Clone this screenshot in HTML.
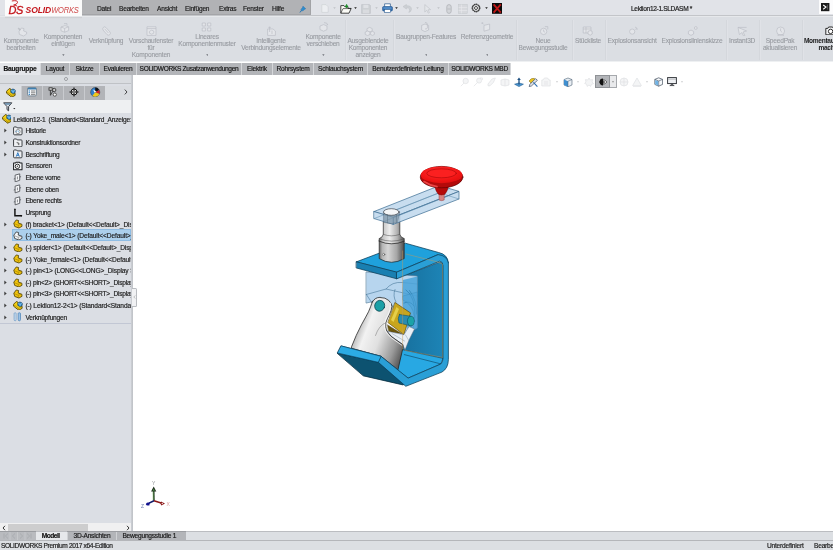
<!DOCTYPE html>
<html lang="de"><head><meta charset="utf-8"><title>SOLIDWORKS</title>
<style>
*{box-sizing:border-box;margin:0;padding:0}
html,body{width:833px;height:550px;overflow:hidden;background:#fff}
body{position:relative;font-family:"Liberation Sans",sans-serif;font-size:6.6px;letter-spacing:-0.22px;color:#1a1a1a;line-height:1}
.abs{position:absolute}
.t,.c,.tab,.row,.btab{will-change:transform}
.t,.tab,.row,.btab{-webkit-text-stroke:.18px #222}
.t{position:absolute;white-space:nowrap;line-height:8px;height:8px}
.c{position:absolute;white-space:nowrap;text-align:center;line-height:7px;color:#979aa0;-webkit-text-stroke:.1px #979aa0;transform:translateX(-50%)}
#top{left:0;top:0;width:833px;height:60.8px;background:#dbdee3}
#menubar{left:82px;top:0;width:229px;height:15.4px;background:#b1b2b5;border-bottom:1px solid #a4a5a8;border-right:1px solid #a2a3a6}
#logo{left:5px;top:0;width:77px;height:18px;background:#fbfbfb}
#tabs{left:0;top:62px;width:833px;height:12px;background:#fff}
.tab{position:absolute;top:62.5px;height:11.5px;background:#b3b5b9;border-right:1px solid #d5d7da;text-align:center;line-height:11.5px;color:#111;white-space:nowrap}
#panel{left:0;top:74px;width:133px;height:457px;background:#dbdee4}
#bottom{left:0;top:531px;width:833px;height:19px;background:#d6d8dc}
.row{position:absolute;left:0;width:131px;height:11px;white-space:nowrap;overflow:hidden;line-height:11px;color:#222}
.btab{top:532px;height:8px;background:#b3b5b9;text-align:center;line-height:8px;white-space:nowrap;color:#111}
</style></head><body>
<div id="top" class="abs"></div>
<div class="abs" style="left:0;top:0;width:833px;height:15px;background:#e1e3e8"></div>
<div class="abs" style="left:0;top:60.8px;width:833px;height:1.7px;background:#eef0f2"></div>
<div id="logo" class="abs"></div>
<div id="menubar" class="abs"></div>
<div id="tabs" class="abs"></div>
<div id="panel" class="abs"></div>
<!--MODEL--><svg class="abs" style="left:0;top:0" width="833" height="550" viewBox="0 0 833 550">
<defs>
<linearGradient id="gsil" x1="0" y1="0" x2="1" y2="0"><stop offset="0" stop-color="#6c6c6c"/><stop offset=".14" stop-color="#c4c4c4"/><stop offset=".42" stop-color="#ededed"/><stop offset=".72" stop-color="#b2b2b2"/><stop offset="1" stop-color="#505050"/></linearGradient>
<linearGradient id="gsil2" x1="0" y1="0" x2="1" y2="0"><stop offset="0" stop-color="#666"/><stop offset=".12" stop-color="#b4b4b4"/><stop offset=".35" stop-color="#d6d6d6"/><stop offset=".7" stop-color="#a6a6a6"/><stop offset="1" stop-color="#4a4a4a"/></linearGradient>
<linearGradient id="gcyl" x1="354" y1="330" x2="404" y2="349" gradientUnits="userSpaceOnUse"><stop offset="0" stop-color="#a8a8a8"/><stop offset=".22" stop-color="#f2f2f2"/><stop offset=".5" stop-color="#e0e0e0"/><stop offset=".82" stop-color="#9a9a9a"/><stop offset="1" stop-color="#5e5e5e"/></linearGradient>
<radialGradient id="gred" cx=".45" cy=".35" r=".8"><stop offset="0" stop-color="#ff3535"/><stop offset=".6" stop-color="#f01414"/><stop offset="1" stop-color="#d50d0d"/></radialGradient>
<linearGradient id="gback" x1="403" y1="0" x2="443" y2="0" gradientUnits="userSpaceOnUse"><stop offset="0" stop-color="#17719f"/><stop offset="1" stop-color="#1d84b6"/></linearGradient>
</defs>
<g stroke-linejoin="round" stroke-linecap="round">
<!-- back plate inner face -->
<path d="M403.3 276 L440 262 L443 264 L443 358.4 L403.3 349.9 Z" fill="url(#gback)" stroke="#0b3f5a" stroke-width=".6"/>
<!-- bend + bottom plate inner top face -->
<path d="M400 349.2 L443 358.4 L440.8 364 L408.1 378.1 L397.2 369.9 Z" fill="#28a8e3" stroke="#0b3f5a" stroke-width=".6"/>
<path d="M404.3 354.6 L440.8 363.9" stroke="#0b3f5a" stroke-width=".6" fill="none"/>
<!-- transparent yoke male body -->
<path d="M366.4 272 L417.3 276 L417.3 328 L404 336 L392 305 L380 297 L371 302 L366.4 303 Z" fill="#b7d5ee" stroke="#4a7594" stroke-width=".6"/>
<path d="M366.4 294.5 L386 289 L417 296 M386 289 Q392 281.5 402.5 282.5 L417 284 M366.4 294.5 L372 303 M395 289.5 Q392.5 296 396 302" fill="none" stroke="#3f6f92" stroke-width=".55"/>
<path d="M402.9 280 L417.3 276.5 L417.3 328 L409 333 Q400 310 402.9 280Z" fill="#4aa3d9" opacity=".85"/>
<path d="M406 290 Q415.5 296 415 318 M409.5 290.5 Q417 300 416.5 314 M404 303 Q410 300 414 306" fill="none" stroke="#1d6f9f" stroke-width=".5"/>
<!-- top plate top face -->
<path d="M356.5 261.8 L405.4 243.2 L438.6 252.5 Q447.6 254.4 448.4 263 L443 264 L438.1 254.6 L396.8 272.1 Z" fill="#1fa1dc" stroke="#0a3c57" stroke-width=".75"/>
<!-- top plate front-left face -->
<path d="M356.5 261.8 L396.8 272.1 L396.8 278.8 L356.5 268 Z" fill="#197fb1" stroke="#0a3c57" stroke-width=".75"/>
<!-- lip dark face -->
<path d="M337.6 353.4 L378.3 361.5 L405 384 L402.9 384.9 L363.6 375.9 Z" fill="#0d5270" stroke="#06283a" stroke-width=".75"/>
<!-- shaft -->
<path d="M379.2 241 L379.2 258.6 Q391.6 266 404.2 258.6 L404.2 241 Q391.6 246 379.2 241Z" fill="url(#gsil2)" stroke="#262626" stroke-width=".7"/>
<path d="M383.3 212 L383.3 234.2 Q383 237.2 379.2 238.6 L379.2 241.2 Q391.6 246.4 404.2 241.2 L404.2 238.6 Q400.2 237.2 399.8 234.2 L399.8 212 Z" fill="url(#gsil)" stroke="#262626" stroke-width=".7"/>
<path d="M379.3 238.8 Q391.6 243.6 404.1 238.8 M383.4 234.4 Q391.6 237.4 399.7 234.4" fill="none" stroke="#4a4a4a" stroke-width=".5"/>
<circle cx="383.7" cy="254.5" r="1.1" fill="#f2f2f2" stroke="#333" stroke-width=".45"/>
<!-- crank arm -->
<g fill="#bdd7ec" fill-opacity=".84" stroke="#3b6b91" stroke-width=".7">
<path d="M374.1 211.5 L439.4 185.6 L459 191.4 L393.3 217.3 Z"/>
<path d="M393.3 217.3 L459 191.4 L459 199 L393.3 224.4 Z"/>
<path d="M374.1 211.5 L393.3 217.3 L393.3 224.4 L374.1 218.6 Z"/>
</g>
<path d="M374.1 218.6 L439.4 192.8 L459 199 M439.4 192.8 L439.4 186 M384 214.6 L449.5 188.6 M384 221.4 L449.5 195.4" fill="none" stroke="#5584a6" stroke-width=".5"/>
<path d="M383.6 213 L383.6 222.3 Q391.4 225.2 397.6 222.3 L399.4 213Z" fill="#7f95a6" opacity=".7" stroke="#45586a" stroke-width=".5"/>
<ellipse cx="391.3" cy="212" rx="7.8" ry="3.3" fill="#f6f7f8" stroke="#33383e" stroke-width=".65"/>
<path d="M387.4 214.6 L387.4 222.8 M396.4 214.2 L396.4 222.4" stroke="#4f6272" stroke-width=".5" opacity=".85"/>
<!-- knob -->
<path d="M439 193 L439 200 Q441.6 201.3 444.2 200 L444.2 193Z" fill="#d88383" stroke="#8f3d3d" stroke-width=".45"/>
<path d="M434.6 186 Q436 192 438.3 194.2 Q441.6 195.8 444.9 194.2 Q447.2 192 448.6 186Z" fill="#b50a0a" stroke="#6e0303" stroke-width=".4"/>
<ellipse cx="441.6" cy="177.1" rx="21.3" ry="10.7" fill="#b40a0a" stroke="#5e0202" stroke-width=".7"/>
<path d="M424 181.5 Q430 185.6 437 186.6" fill="none" stroke="#ff5a5a" stroke-width="1.6" opacity=".75"/>
<ellipse cx="441.6" cy="174.9" rx="20.8" ry="8.3" fill="url(#gred)"/>
<ellipse cx="441.6" cy="173.3" rx="14.8" ry="4.5" fill="#fb2020" stroke="#a80707" stroke-width=".6"/>
<!-- spider (yellow) -->
<path d="M395.2 302.6 L410.5 312.9 L403.9 334.7 L388.1 322.7 Z" fill="#c8a51d" stroke="#4d3d06" stroke-width=".6"/>
<path d="M396.5 307 L399 309 L393.5 322 L391 320Z" fill="#e6cf4a"/>
<path d="M387.6 324.9 L401.8 333.7 L388.7 331.5Z" fill="#6b560c" stroke="#3a2d04" stroke-width=".4"/>
<!-- pin 2 teal -->
<path d="M399.5 314.5 L410.5 316.2 L411.4 326 L399 323 Q397.2 318.5 399.5 314.5Z" fill="#2a8bb0" stroke="#0b4656" stroke-width=".5"/>
<ellipse cx="411" cy="321.1" rx="3.6" ry="4.9" fill="#1ba3a8" stroke="#0b4656" stroke-width=".55"/>
<path d="M402.9 296 L417.3 292 L417.3 328 L412 331 Q416 321 413 311 Q410 303 402.9 300Z" fill="#4aa3d9" opacity=".55" stroke="#1d6f9f" stroke-width=".4"/>
<!-- fork 2 (white-ish) -->
<path d="M386.5 330.4 L391.9 336.9 L402.8 344.6 L405 350 L409 340 L414.5 329 L409 326.5 L403.9 334.7 L388.7 331.5Z" fill="#e9eff5" stroke="#59677a" stroke-width=".5"/>
<path d="M392 333.5 L404.5 341 M405.5 335 L408.5 340" fill="none" stroke="#8593a3" stroke-width=".45"/>
<!-- yoke female silver body -->
<path d="M372.3 302 Q375 297.2 379.9 297.5 Q385.5 297.4 388.7 300.4 Q391.6 303 391.9 306.4 Q391.6 310.5 389.7 314 Q387.2 318.5 385.9 322.7 Q385.4 327 386.5 330.4 Q388.5 334 391.9 336.9 L402.8 344.6 L402.9 348.1 L397.9 369.9 L381 356.3 L351.6 348.3 L351.5 346.8 Q356 335 361.4 324.9 Q365.5 317.5 368.5 311.8 Q370.6 307 372.3 302Z" fill="url(#gcyl)" stroke="#1f1f1f" stroke-width=".75"/>
<path d="M390.6 303 Q390.6 310 388.4 314 Q385.4 319.5 384.6 323 Q384 328 385.6 331 Q387.5 334.6 391.3 337.8 L401.8 345.2" fill="none" stroke="#fafafa" stroke-width=".8"/>
<path d="M385.9 322.7 Q379 325 375.5 335.5" fill="none" stroke="#7d7d7d" stroke-width=".55"/>
<ellipse cx="379.7" cy="305.8" rx="5" ry="5.5" fill="#1b9fa6" stroke="#0a3f4a" stroke-width=".7" transform="rotate(18 379.7 305.8)"/>
<!-- profile face (C-shape) -->
<path d="M396.8 272.1 L438.1 254.6 Q446.8 255.4 448.4 263 L448.4 359.5 Q448.2 368.5 441.9 372.1 L405.8 386.3 L378.3 362.3 L337.6 353 L341.2 345.9 L381 356.3 L408.1 378.1 L440.8 364 Q443 361.5 443 358.4 L443 265.5 Q442.8 261.6 439.7 261.2 L396.8 278.8 Z" fill="#2a9fd6" stroke="#0a3c57" stroke-width=".75"/>
<path d="M381 356.3 L378.3 362.3" stroke="#0a3c57" stroke-width=".6"/>
<path d="M341.2 345.9 L381 356.3 L378.3 362.3 L337.6 353Z" fill="#2cabe4" stroke="#0a3c57" stroke-width=".6"/>
<!-- orange sketch lines -->
<path d="M402.6 251 L402.6 349 M405.9 254 L436.5 261.7 L442.5 264 L442.7 357.5 L405.5 350.5" fill="none" stroke="#c29a5a" stroke-width=".55" opacity=".85"/>
</g>
</svg>
<!--/MODEL-->
<div id="bottom" class="abs"></div>
<!--PANEL-->
<div class="abs" style="left:0;top:74px;width:133px;height:9px;background:#d9dce0"></div>
<div class="abs" style="left:0;top:82.5px;width:131px;height:1px;background:#bfc2c6"></div><div class="abs" style="left:0;top:74px;width:133px;height:1px;background:#c4c6ca"></div>
<div class="abs" style="left:63.5px;top:77px;width:4px;height:4px;border:.7px solid #9a9da1;border-radius:50%;background:#e8eaed"></div>
<div class="abs" style="left:0;top:85.5px;width:21px;height:14px;background:#dde0e4"></div>
<div class="abs" style="left:21px;top:85.5px;width:21px;height:14px;background:#b2b4b8;border-left:1px solid #c9cbcf"></div>
<div class="abs" style="left:42px;top:85.5px;width:21px;height:14px;background:#b2b4b8;border-left:1px solid #c9cbcf"></div>
<div class="abs" style="left:63px;top:85.5px;width:21px;height:14px;background:#b2b4b8;border-left:1px solid #c9cbcf"></div>
<div class="abs" style="left:84px;top:85.5px;width:21px;height:14px;background:#b2b4b8;border-left:1px solid #c9cbcf"></div>
<div class="abs" style="left:105px;top:85.5px;width:26px;height:14px;background:#d9dce0"></div>
<svg class="abs" style="left:124.00px;top:89.00px" width="4" height="6" viewBox="0 0 4 6"><path d="M0.8 0.6 L3 3 L0.8 5.4" fill="none" stroke="#333" stroke-width=".9"/></svg>
<div class="abs" style="left:0;top:100px;width:131px;height:12.8px;background:#eef0f2"></div>
<div class="abs" style="left:131px;top:74px;width:2.2px;height:457px;background:linear-gradient(90deg,#cdd0d5,#bec1c6)"></div>
<div class="abs" style="left:11.6px;top:229.4px;width:119.4px;height:11.8px;background:#acd0ec;border:.6px solid #8fbde4"></div>
<div class="row" style="top:113.70px;padding-left:13.3px">Lektion12-1&nbsp; (Standard&lt;Standard_Anzeige:</div>
<svg class="abs" style="left:1.50px;top:114.40px" width="9.6" height="9.6" viewBox="0 0 10 10"><path d="M3.4 .6 L.5 3.5 L.6 5.4 L5.9 9.6 L9.5 7.7 L9.5 5.6 L6 4.6 L5.2 1.2Z" fill="#f2cd14" stroke="#4a3c00" stroke-width=".85" stroke-linejoin="round"/><path d="M.7 3.8 L5.9 7.6 L9.4 5.9 M5.9 7.6 L5.9 9.4" fill="none" stroke="#8a7000" stroke-width=".5"/><path d="M5 2.4 L7.2 1 L9.6 2.2 L9.6 4.6 L7.4 5.8 L5 4.6Z" fill="#2f8fd4" stroke="#0f3a5e" stroke-width=".7" stroke-linejoin="round"/><path d="M5.2 2.5 L7.4 3.5 L9.5 2.4 M7.4 3.5 L7.4 5.6" stroke="#d5ebfa" stroke-width=".5" fill="none"/></svg>
<div class="row" style="top:125.35px;padding-left:25.4px">Historie</div>
<svg class="abs" style="left:13.20px;top:126.05px" width="9.6" height="9.6" viewBox="0 0 10 10"><path d="M0.6 2 Q0.6 1 1.6 1 L3.6 1 L4.4 2 L8.6 2 Q9.4 2 9.4 3 L9.4 8.2 Q9.4 9.2 8.4 9.2 L1.6 9.2 Q0.6 9.2 0.6 8.2 Z" fill="#eef0f3" stroke="#2e3136" stroke-width=".95"/><circle cx="5.2" cy="5.8" r="2.2" fill="#fff" stroke="#555" stroke-width=".6"/><path d="M5.2 4.5 L5.2 5.9 L6.3 6.4" stroke="#2b7fc4" stroke-width=".6" fill="none"/><path d="M2.4 5.6 L3.6 5 L3.6 6.4Z" fill="#2b7fc4"/></svg>
<svg class="abs" style="left:3.60px;top:128.35px" width="3" height="5" viewBox="0 0 3 5"><path d="M0.3 0.4 L2.7 2.5 L0.3 4.6Z" fill="#3c3c3c"/></svg>
<div class="row" style="top:137.00px;padding-left:25.4px">Konstruktionsordner</div>
<svg class="abs" style="left:13.20px;top:137.70px" width="9.6" height="9.6" viewBox="0 0 10 10"><path d="M0.6 2 Q0.6 1 1.6 1 L3.6 1 L4.4 2 L8.6 2 Q9.4 2 9.4 3 L9.4 8.2 Q9.4 9.2 8.4 9.2 L1.6 9.2 Q0.6 9.2 0.6 8.2 Z" fill="#eef0f3" stroke="#2e3136" stroke-width=".95"/><path d="M4 4.4 L6.4 5.2 L6.4 7.4 L5.4 7 L5.4 5.6 L4 5.2Z" fill="#777" stroke="#444" stroke-width=".3"/></svg>
<svg class="abs" style="left:3.60px;top:140.00px" width="3" height="5" viewBox="0 0 3 5"><path d="M0.3 0.4 L2.7 2.5 L0.3 4.6Z" fill="#3c3c3c"/></svg>
<div class="row" style="top:148.65px;padding-left:25.4px">Beschriftung</div>
<svg class="abs" style="left:13.20px;top:149.35px" width="9.6" height="9.6" viewBox="0 0 10 10"><path d="M0.6 2 Q0.6 1 1.6 1 L3.6 1 L4.4 2 L8.6 2 Q9.4 2 9.4 3 L9.4 8.2 Q9.4 9.2 8.4 9.2 L1.6 9.2 Q0.6 9.2 0.6 8.2 Z" fill="#eef0f3" stroke="#2e3136" stroke-width=".95"/><path d="M3.4 8 L5 3.8 L6.6 8 M4 6.6 L6 6.6" stroke="#1d6fbe" stroke-width=".9" fill="none"/></svg>
<svg class="abs" style="left:3.60px;top:151.65px" width="3" height="5" viewBox="0 0 3 5"><path d="M0.3 0.4 L2.7 2.5 L0.3 4.6Z" fill="#3c3c3c"/></svg>
<div class="row" style="top:160.30px;padding-left:25.4px">Sensoren</div>
<svg class="abs" style="left:13.20px;top:161.00px" width="9.6" height="9.6" viewBox="0 0 10 10"><path d="M0.6 2.2 L2.6 2.2 L3.2 1.2 L6.8 1.2 L7.4 2.2 L9.4 2.2 L9.4 9 L0.6 9Z" fill="#f3f4f6" stroke="#1c1e21" stroke-width="1.05" stroke-linejoin="round"/><circle cx="4.6" cy="5.6" r="2.3" fill="#fff" stroke="#1c1e21" stroke-width=".95"/><circle cx="4.6" cy="5.6" r=".8" fill="#555"/></svg>
<div class="row" style="top:171.95px;padding-left:25.4px">Ebene vorne</div>
<svg class="abs" style="left:13.20px;top:172.65px" width="9.6" height="9.6" viewBox="0 0 10 10"><path d="M2.2 2.2 L7 0.9 L7 7.6 L2.2 9.2 Z" fill="#f6f7f9" stroke="#55585d" stroke-width=".95" stroke-linejoin="round"/><path d="M7 4.2 L8.4 3.8 M2.2 5.9 L0.8 6.3" stroke="#55585d" stroke-width=".9"/><path d="M4.6 3.6 L4.6 6.6" stroke="#6a6d72" stroke-width=".8"/></svg>
<div class="row" style="top:183.60px;padding-left:25.4px">Ebene oben</div>
<svg class="abs" style="left:13.20px;top:184.30px" width="9.6" height="9.6" viewBox="0 0 10 10"><path d="M2.2 2.2 L7 0.9 L7 7.6 L2.2 9.2 Z" fill="#f6f7f9" stroke="#55585d" stroke-width=".95" stroke-linejoin="round"/><path d="M7 4.2 L8.4 3.8 M2.2 5.9 L0.8 6.3" stroke="#55585d" stroke-width=".9"/><path d="M4.6 3.6 L4.6 6.6" stroke="#6a6d72" stroke-width=".8"/></svg>
<div class="row" style="top:195.25px;padding-left:25.4px">Ebene rechts</div>
<svg class="abs" style="left:13.20px;top:195.95px" width="9.6" height="9.6" viewBox="0 0 10 10"><path d="M2.2 2.2 L7 0.9 L7 7.6 L2.2 9.2 Z" fill="#f6f7f9" stroke="#55585d" stroke-width=".95" stroke-linejoin="round"/><path d="M7 4.2 L8.4 3.8 M2.2 5.9 L0.8 6.3" stroke="#55585d" stroke-width=".9"/><path d="M4.6 3.6 L4.6 6.6" stroke="#6a6d72" stroke-width=".8"/></svg>
<div class="row" style="top:206.90px;padding-left:25.4px">Ursprung</div>
<svg class="abs" style="left:13.20px;top:207.60px" width="9.6" height="9.6" viewBox="0 0 10 10"><path d="M2 0.8 L2 8 L9.4 8" fill="none" stroke="#111" stroke-width="1.5" stroke-linejoin="miter"/><path d="M2 0.4 L3 2 L1 2Z M9.8 8 L8.2 7 L8.2 9Z" fill="#1a1a1a"/></svg>
<div class="row" style="letter-spacing:-.12px;top:218.55px;padding-left:25.4px">(f) bracket&lt;1&gt; (Default&lt;&lt;Default&gt;_Display State 1&gt;)</div>
<svg class="abs" style="left:13.20px;top:219.25px" width="9.6" height="9.6" viewBox="0 0 10 10"><path d="M0.8 4.4 L3.4 1 L5.8 1.6 L5.4 4.2 L9.2 5.4 L9.4 7.6 L6.2 9.4 L1.8 7.8 Z" fill="#f1c40c" stroke="#4e3f00" stroke-width=".85" stroke-linejoin="round"/><path d="M1.2 4.8 L5.4 6.4 L9 5.6 M5.4 6.4 L5.6 9" fill="none" stroke="#8a6e00" stroke-width=".5"/></svg>
<svg class="abs" style="left:3.60px;top:221.55px" width="3" height="5" viewBox="0 0 3 5"><path d="M0.3 0.4 L2.7 2.5 L0.3 4.6Z" fill="#3c3c3c"/></svg>
<div class="row" style="letter-spacing:-.12px;top:230.20px;padding-left:25.4px">(-) Yoke_male&lt;1&gt; (Default&lt;&lt;Default&gt;_Display State 1&gt;)</div>
<svg class="abs" style="left:13.20px;top:230.90px" width="9.6" height="9.6" viewBox="0 0 10 10"><path d="M0.8 4.4 L3.4 1 L5.8 1.6 L5.4 4.2 L9.2 5.4 L9.4 7.6 L6.2 9.4 L1.8 7.8 Z" fill="#f4f6f8" stroke="#333" stroke-width=".85" stroke-linejoin="round"/><path d="M1.2 4.8 L5.4 6.4 L9 5.6 M5.4 6.4 L5.6 9" fill="none" stroke="#666" stroke-width=".5"/></svg>
<div class="row" style="letter-spacing:-.12px;top:241.85px;padding-left:25.4px">(-) spider&lt;1&gt; (Default&lt;&lt;Default&gt;_Display State 1&gt;)</div>
<svg class="abs" style="left:13.20px;top:242.55px" width="9.6" height="9.6" viewBox="0 0 10 10"><path d="M0.8 4.4 L3.4 1 L5.8 1.6 L5.4 4.2 L9.2 5.4 L9.4 7.6 L6.2 9.4 L1.8 7.8 Z" fill="#f1c40c" stroke="#4e3f00" stroke-width=".85" stroke-linejoin="round"/><path d="M1.2 4.8 L5.4 6.4 L9 5.6 M5.4 6.4 L5.6 9" fill="none" stroke="#8a6e00" stroke-width=".5"/></svg>
<svg class="abs" style="left:3.60px;top:244.85px" width="3" height="5" viewBox="0 0 3 5"><path d="M0.3 0.4 L2.7 2.5 L0.3 4.6Z" fill="#3c3c3c"/></svg>
<div class="row" style="letter-spacing:-.12px;top:253.50px;padding-left:25.4px">(-) Yoke_female&lt;1&gt; (Default&lt;&lt;Default&gt;_Display State 1&gt;)</div>
<svg class="abs" style="left:13.20px;top:254.20px" width="9.6" height="9.6" viewBox="0 0 10 10"><path d="M0.8 4.4 L3.4 1 L5.8 1.6 L5.4 4.2 L9.2 5.4 L9.4 7.6 L6.2 9.4 L1.8 7.8 Z" fill="#f1c40c" stroke="#4e3f00" stroke-width=".85" stroke-linejoin="round"/><path d="M1.2 4.8 L5.4 6.4 L9 5.6 M5.4 6.4 L5.6 9" fill="none" stroke="#8a6e00" stroke-width=".5"/></svg>
<svg class="abs" style="left:3.60px;top:256.50px" width="3" height="5" viewBox="0 0 3 5"><path d="M0.3 0.4 L2.7 2.5 L0.3 4.6Z" fill="#3c3c3c"/></svg>
<div class="row" style="letter-spacing:-.12px;top:265.15px;padding-left:25.4px">(-) pin&lt;1&gt; (LONG&lt;&lt;LONG&gt;_Display State 1&gt;)</div>
<svg class="abs" style="left:13.20px;top:265.85px" width="9.6" height="9.6" viewBox="0 0 10 10"><path d="M0.8 4.4 L3.4 1 L5.8 1.6 L5.4 4.2 L9.2 5.4 L9.4 7.6 L6.2 9.4 L1.8 7.8 Z" fill="#f1c40c" stroke="#4e3f00" stroke-width=".85" stroke-linejoin="round"/><path d="M1.2 4.8 L5.4 6.4 L9 5.6 M5.4 6.4 L5.6 9" fill="none" stroke="#8a6e00" stroke-width=".5"/></svg>
<svg class="abs" style="left:3.60px;top:268.15px" width="3" height="5" viewBox="0 0 3 5"><path d="M0.3 0.4 L2.7 2.5 L0.3 4.6Z" fill="#3c3c3c"/></svg>
<div class="row" style="top:276.80px;padding-left:25.4px">(-) pin&lt;2&gt; (SHORT&lt;&lt;SHORT&gt;_Display State 1&gt;)</div>
<svg class="abs" style="left:13.20px;top:277.50px" width="9.6" height="9.6" viewBox="0 0 10 10"><path d="M0.8 4.4 L3.4 1 L5.8 1.6 L5.4 4.2 L9.2 5.4 L9.4 7.6 L6.2 9.4 L1.8 7.8 Z" fill="#f1c40c" stroke="#4e3f00" stroke-width=".85" stroke-linejoin="round"/><path d="M1.2 4.8 L5.4 6.4 L9 5.6 M5.4 6.4 L5.6 9" fill="none" stroke="#8a6e00" stroke-width=".5"/></svg>
<svg class="abs" style="left:3.60px;top:279.80px" width="3" height="5" viewBox="0 0 3 5"><path d="M0.3 0.4 L2.7 2.5 L0.3 4.6Z" fill="#3c3c3c"/></svg>
<div class="row" style="top:288.45px;padding-left:25.4px">(-) pin&lt;3&gt; (SHORT&lt;&lt;SHORT&gt;_Display State 1&gt;)</div>
<svg class="abs" style="left:13.20px;top:289.15px" width="9.6" height="9.6" viewBox="0 0 10 10"><path d="M0.8 4.4 L3.4 1 L5.8 1.6 L5.4 4.2 L9.2 5.4 L9.4 7.6 L6.2 9.4 L1.8 7.8 Z" fill="#f1c40c" stroke="#4e3f00" stroke-width=".85" stroke-linejoin="round"/><path d="M1.2 4.8 L5.4 6.4 L9 5.6 M5.4 6.4 L5.6 9" fill="none" stroke="#8a6e00" stroke-width=".5"/></svg>
<svg class="abs" style="left:3.60px;top:291.45px" width="3" height="5" viewBox="0 0 3 5"><path d="M0.3 0.4 L2.7 2.5 L0.3 4.6Z" fill="#3c3c3c"/></svg>
<div class="row" style="letter-spacing:-.12px;top:300.10px;padding-left:25.4px">(-) Lektion12-2&lt;1&gt; (Standard&lt;Standard_Anzeigestatus-1&gt;)</div>
<svg class="abs" style="left:13.20px;top:300.80px" width="9.6" height="9.6" viewBox="0 0 10 10"><path d="M3.4 .6 L.5 3.5 L.6 5.4 L5.9 9.6 L9.5 7.7 L9.5 5.6 L6 4.6 L5.2 1.2Z" fill="#f2cd14" stroke="#4a3c00" stroke-width=".85" stroke-linejoin="round"/><path d="M.7 3.8 L5.9 7.6 L9.4 5.9 M5.9 7.6 L5.9 9.4" fill="none" stroke="#8a7000" stroke-width=".5"/><path d="M5 2.4 L7.2 1 L9.6 2.2 L9.6 4.6 L7.4 5.8 L5 4.6Z" fill="#2f8fd4" stroke="#0f3a5e" stroke-width=".7" stroke-linejoin="round"/><path d="M5.2 2.5 L7.4 3.5 L9.5 2.4 M7.4 3.5 L7.4 5.6" stroke="#d5ebfa" stroke-width=".5" fill="none"/></svg>
<svg class="abs" style="left:3.60px;top:303.10px" width="3" height="5" viewBox="0 0 3 5"><path d="M0.3 0.4 L2.7 2.5 L0.3 4.6Z" fill="#3c3c3c"/></svg>
<div class="row" style="top:311.75px;padding-left:25.4px">Verknüpfungen</div>
<svg class="abs" style="left:13.20px;top:312.45px" width="9.6" height="9.6" viewBox="0 0 10 10"><path d="M1.2 1.6 Q1.2 .8 2.2 .8 Q3.2 .8 3.2 1.6 L3.2 7.8 Q3.2 9.2 2.2 9.2 Q1.2 9.2 1.2 7.8Z" fill="#d7e7f5" stroke="#5b8fc0" stroke-width=".7"/><path d="M5.4 1.6 Q5.4 .8 6.6 .8 Q7.8 .8 7.8 1.6 L7.8 7.8 Q7.8 9.2 6.6 9.2 Q5.4 9.2 5.4 7.8Z" fill="#9cc4e8" stroke="#3d78b0" stroke-width=".7"/></svg>
<svg class="abs" style="left:3.60px;top:314.75px" width="3" height="5" viewBox="0 0 3 5"><path d="M0.3 0.4 L2.7 2.5 L0.3 4.6Z" fill="#3c3c3c"/></svg>
<!--/PANEL-->
<!--MGR-->
<svg class="abs" style="left:6.20px;top:87.60px" width="9.6" height="9.6" viewBox="0 0 10 10"><path d="M3.4 .6 L.5 3.5 L.6 5.4 L5.9 9.6 L9.5 7.7 L9.5 5.6 L6 4.6 L5.2 1.2Z" fill="#f2cd14" stroke="#4a3c00" stroke-width=".85" stroke-linejoin="round"/><path d="M.7 3.8 L5.9 7.6 L9.4 5.9 M5.9 7.6 L5.9 9.4" fill="none" stroke="#8a7000" stroke-width=".5"/><path d="M5 2.4 L7.2 1 L9.6 2.2 L9.6 4.6 L7.4 5.8 L5 4.6Z" fill="#2f8fd4" stroke="#0f3a5e" stroke-width=".7" stroke-linejoin="round"/><path d="M5.2 2.5 L7.4 3.5 L9.5 2.4 M7.4 3.5 L7.4 5.6" stroke="#d5ebfa" stroke-width=".5" fill="none"/></svg>
<svg class="abs" style="left:26.80px;top:87.40px" width="10" height="9.4" viewBox="0 0 10 9.4"><rect x=".5" y=".5" width="9" height="8.4" rx="1.4" fill="#f4f6f8" stroke="#5a6e80" stroke-width=".7"/><path d="M.8 2.4 L9.2 2.4 L9.2 1.8 Q9.2 .8 8.2 .8 L1.8 .8 Q.8 .8 .8 1.8Z" fill="#3f7fb0"/><path d="M4 4 L8.4 4 M4 5.8 L8.4 5.8 M4 7.6 L8.4 7.6" stroke="#555" stroke-width=".7"/><path d="M1.6 4 L3 4 M1.6 5.8 L3 5.8 M1.6 7.6 L3 7.6" stroke="#2b7fc4" stroke-width="1"/></svg>
<svg class="abs" style="left:48.20px;top:87.20px" width="10" height="10" viewBox="0 0 10 10"><rect x="1" y=".8" width="3.2" height="2.4" fill="#d8d8d8" stroke="#2a2a2a" stroke-width=".8"/><path d="M2.4 3.2 L2.4 8.6 M2.6 8 L5.2 3.6" fill="none" stroke="#2a2a2a" stroke-width=".8"/><circle cx="6.2" cy="3" r="1.7" fill="#c9c9c9" stroke="#2a2a2a" stroke-width=".8"/><circle cx="6.8" cy="7.6" r="1.6" fill="#f8f8f8" stroke="#2a2a2a" stroke-width=".7"/></svg>
<svg class="abs" style="left:69.40px;top:87.20px" width="10" height="10" viewBox="0 0 10 10"><circle cx="5" cy="5" r="3" fill="#dedede" stroke="#111" stroke-width="1"/><path d="M5 .4 L5 9.6 M.4 5 L9.6 5" stroke="#111" stroke-width=".9"/><circle cx="5" cy="5" r="1" fill="#fff" stroke="#111" stroke-width=".5"/></svg>
<svg class="abs" style="left:90.20px;top:87.00px" width="10.4" height="10.4" viewBox="0 0 10.4 10.4"><circle cx="5.2" cy="5.2" r="4.6" fill="#2f7fd0" stroke="#333" stroke-width=".5"/><path d="M5.2 5.2 L5.2 .6 A4.6 4.6 0 0 1 9.2 3Z" fill="#111"/><path d="M5.2 5.2 L9.2 3 A4.6 4.6 0 0 1 9.4 7Z" fill="#d62020"/><path d="M5.2 5.2 L9.4 7 A4.6 4.6 0 0 1 2.4 8.8Z" fill="#f2c81a"/><path d="M3.2 2.6 L6.4 4.6 L4.4 5.4Z" fill="#fff"/></svg>
<svg class="abs" style="left:2.80px;top:101.80px" width="13" height="10" viewBox="0 0 13 10"><path d="M.6 .8 L8.8 .8 L5.6 4.6 L5.6 8.8 L4 7.6 L4 4.6 Z" fill="#dfe6ee" stroke="#2a2d33" stroke-width=".9" stroke-linejoin="round"/><path d="M1.4 1.2 L8 1.2 L6.6 2.8 L2.8 2.8Z" fill="#5f88a8"/><path d="M10.2 6 L12.4 6 L11.3 7.2Z" fill="#222"/></svg>
<div class="abs" style="left:131.5px;top:287.5px;width:5.5px;height:19px;background:#f1f2f4;border:.6px solid #b9bcc0;border-left:none;border-radius:0 1.5px 1.5px 0"></div>
<svg class="abs" style="left:133.00px;top:295.00px" width="3" height="4" viewBox="0 0 3 4"><path d="M2.2 .5 L.8 2 L2.2 3.5" fill="none" stroke="#888" stroke-width=".5"/></svg>
<div class="abs" style="left:0;top:322.8px;width:131px;height:1px;background:#c2c7d4"></div>
<!--/MGR-->
<!--BOT-->
<div class="abs" style="left:0;top:523px;width:131px;height:8px;background:#f0f0f1"></div>
<div class="abs" style="left:8px;top:524px;width:80px;height:7px;background:#cdcdce"></div>
<svg class="abs" style="left:1.60px;top:524.60px" width="4" height="6" viewBox="0 0 4 6"><path d="M3 .8 L1 3 L3 5.2" fill="none" stroke="#222" stroke-width=".9"/></svg>
<svg class="abs" style="left:126.00px;top:524.60px" width="4" height="6" viewBox="0 0 4 6"><path d="M1 .8 L3 3 L1 5.2" fill="none" stroke="#222" stroke-width=".9"/></svg>
<div class="abs" style="left:0;top:531.3px;width:833px;height:1.2px;background:#bbbdc1"></div><div class="abs" style="left:0;top:531.3px;width:36px;height:.9px;background:#9b9da1"></div><div class="abs" style="left:67px;top:531.3px;width:118.5px;height:.9px;background:#9b9da1"></div>
<div class="abs" style="left:0;top:532px;width:36px;height:8px;background:#b9bbbf"></div>
<svg class="abs" style="left:1.00px;top:532.00px" width="34" height="8" viewBox="0 0 34 8"><path d="M3 1.5 L3 6.5 M7 1.5 L4.4 4 L7 6.5" fill="none" stroke="#a4a6aa" stroke-width=".7"/><path d="M14 1.5 L11.4 4 L14 6.5" fill="none" stroke="#a4a6aa" stroke-width=".7"/><path d="M19 1.5 L21.6 4 L19 6.5" fill="none" stroke="#a4a6aa" stroke-width=".7"/><path d="M26 1.5 L28.6 4 L26 6.5 M30 1.5 L30 6.5" fill="none" stroke="#a4a6aa" stroke-width=".7"/><path d="M9 0 L9 8 M16.5 0 L16.5 8 M24 0 L24 8" stroke="#cfd1d4" stroke-width=".6"/></svg>
<div class="abs btab" style="left:36px;width:31px;background:#e6e8eb;font-weight:bold;letter-spacing:-.5px;text-indent:-1.5px">Modell</div>
<div class="abs btab" style="left:67px;width:49px;border-left:1px solid #d0d2d5">3D-Ansichten</div>
<div class="abs btab" style="left:116px;width:69.5px;border-left:1px solid #d0d2d5;text-align:left;padding-left:5.4px">Bewegungsstudie 1</div>
<div class="abs" style="left:185.5px;top:532px;width:648px;height:8px;background:#dcdfe3"></div>
<div class="abs" style="left:0;top:540px;width:833px;height:1.3px;background:#b4b6ba"></div>
<div class="abs" style="left:0;top:541.3px;width:833px;height:8.7px;background:#dcdfe3"></div>
<div class="t" style="left:1px;top:542px;letter-spacing:-.36px">SOLIDWORKS Premium 2017 x64-Edition</div>
<div class="t" style="left:766.5px;top:542px">Unterdefiniert</div>
<div class="t" style="left:814px;top:542px">Bearbeiten Baugruppe</div>
<!--/BOT-->
<!--LOGO-->
<div class="abs" style="left:5px;top:17px;width:77px;height:1.5px;background:linear-gradient(#c9cbcf,#dfe1e5)"></div>
<svg class="abs" style="left:5.00px;top:0.00px" width="77" height="18" viewBox="0 0 77 18"><path d="M7.2 .9 Q12.9 -.1 12.5 2.5 Q12 4.5 8.6 5.1 Q11.6 4.9 12.2 6.2" fill="none" stroke="#c4161c" stroke-width=".95" stroke-linecap="round"/><text x="3.4" y="14.3" font-family="Liberation Sans, sans-serif" font-size="11.6" font-style="italic" fill="#c4161c" stroke="#c4161c" stroke-width=".35" textLength="14.8" lengthAdjust="spacingAndGlyphs">DS</text><text x="20.6" y="13.2" font-family="Liberation Sans, sans-serif" font-size="8.2" font-style="italic" font-weight="bold" fill="#c4161c" letter-spacing="-0.1" textLength="25.6" lengthAdjust="spacingAndGlyphs">SOLID</text><text x="46.2" y="13.2" font-family="Liberation Sans, sans-serif" font-size="8.2" font-style="italic" fill="#cf4a4a" textLength="27.4" lengthAdjust="spacingAndGlyphs">WORKS</text></svg>
<!--/LOGO-->
<!--TB-->
<svg class="abs" style="left:298.80px;top:5.00px" width="8" height="8" viewBox="0 0 8 8"><path d="M4 1.2 L6.6 3.8 L5.4 4.4 L3.6 6 L3 5.4 L.8 7.4 L2.6 5 L2 4.4 L3.6 2.6Z" fill="#2f8fd0" stroke="#1f6aa8" stroke-width=".5"/></svg>
<svg class="abs" style="left:321.00px;top:3.80px" width="8" height="9" viewBox="0 0 8 9"><path d="M.8 .6 L5 .6 L7.2 2.8 L7.2 8.4 L.8 8.4Z" fill="#eceef1" stroke="#cfd2d6" stroke-width=".7"/></svg>
<svg class="abs" style="left:333.40px;top:7.00px" width="3" height="2.4" viewBox="0 0 3 2.4"><path d="M.2 .3 L2.8 .3 L1.5 2Z" fill="#bfc2c7"/></svg>
<svg class="abs" style="left:339.60px;top:3.60px" width="12" height="10" viewBox="0 0 12 10"><path d="M.8 1.6 L4 1.6 L4.8 2.8 L8 2.8 L8 4.4 L11.2 4.4 L9 9.2 L.8 9.2Z" fill="#fbfbf6" stroke="#1a1a1a" stroke-width=".8" stroke-linejoin="round"/><path d="M.8 9.2 L3 4.6 L11 4.6" fill="none" stroke="#1a1a1a" stroke-width=".6"/><path d="M6.6 .2 L6.6 2.6 M5.2 2 L6.6 3.8 L8 2Z" stroke="#1d8a2a" stroke-width="1" fill="#1d8a2a"/></svg>
<svg class="abs" style="left:354.10px;top:7.00px" width="3" height="2.4" viewBox="0 0 3 2.4"><path d="M.2 .3 L2.8 .3 L1.5 2Z" fill="#222"/></svg>
<svg class="abs" style="left:361.20px;top:3.60px" width="10" height="10" viewBox="0 0 10 10"><path d="M.6 .6 L8.4 .6 L9.4 1.6 L9.4 9.4 L.6 9.4Z" fill="#cdd0d4" stroke="#bcbfc4" stroke-width=".6"/><rect x="2.4" y=".8" width="5" height="3.2" fill="#dfe1e5"/><rect x="2" y="5.6" width="6" height="3.6" fill="#d9dbdf"/></svg>
<svg class="abs" style="left:375.00px;top:7.00px" width="3" height="2.4" viewBox="0 0 3 2.4"><path d="M.2 .3 L2.8 .3 L1.5 2Z" fill="#bfc2c7"/></svg>
<svg class="abs" style="left:381.60px;top:3.40px" width="11" height="10" viewBox="0 0 11 10"><path d="M2.6 3.6 L2.6 .8 L8.4 .8 L8.4 3.6" fill="#fff" stroke="#27568c" stroke-width=".7"/><rect x=".6" y="3.6" width="9.8" height="4.4" rx="1" fill="#2f72b8" stroke="#1d4e85" stroke-width=".6"/><rect x="2.4" y="6.4" width="6.2" height="3.2" fill="#fff" stroke="#27568c" stroke-width=".6"/><path d="M1.4 5 L9.6 5" stroke="#9cc3ea" stroke-width=".6"/></svg>
<svg class="abs" style="left:395.10px;top:7.00px" width="3" height="2.4" viewBox="0 0 3 2.4"><path d="M.2 .3 L2.8 .3 L1.5 2Z" fill="#222"/></svg>
<svg class="abs" style="left:402.00px;top:4.00px" width="11" height="9" viewBox="0 0 11 9"><path d="M1 2.6 L4.4 .6 L4.4 1.8 Q9.6 1.4 9.4 5.4 Q9.2 7.8 6.8 8.4 Q8.2 6.6 7.4 5 Q6.6 3.6 4.4 3.8 L4.4 5Z" fill="#cdd0d5" stroke="#bdc0c5" stroke-width=".5"/></svg>
<svg class="abs" style="left:416.20px;top:7.00px" width="3" height="2.4" viewBox="0 0 3 2.4"><path d="M.2 .3 L2.8 .3 L1.5 2Z" fill="#bfc2c7"/></svg>
<svg class="abs" style="left:423.60px;top:3.60px" width="8" height="10" viewBox="0 0 8 10"><path d="M.8 .6 L.8 8 L2.8 6.2 L4.2 9.2 L5.4 8.6 L4 5.8 L6.6 5.6Z" fill="#e4e6ea" stroke="#bec1c6" stroke-width=".6"/></svg>
<svg class="abs" style="left:436.50px;top:7.00px" width="3" height="2.4" viewBox="0 0 3 2.4"><path d="M.2 .3 L2.8 .3 L1.5 2Z" fill="#bfc2c7"/></svg>
<svg class="abs" style="left:445.80px;top:3.60px" width="6" height="10" viewBox="0 0 6 10"><rect x=".8" y=".6" width="4.4" height="8.8" rx="2.2" fill="#d4d6da" stroke="#b0b3b8" stroke-width=".8"/><path d="M1.4 5 L4.6 5" stroke="#b0b3b8" stroke-width=".7"/></svg>
<svg class="abs" style="left:458.00px;top:3.60px" width="10" height="10" viewBox="0 0 10 10"><rect x=".6" y=".6" width="8.6" height="8.8" fill="#d6d8dc" stroke="#c2c5c9" stroke-width=".5"/><path d="M3.4 .6 L3.4 9.4 M.6 3.4 L9.2 3.4 M.6 6.4 L9.2 6.4" stroke="#e8eaed" stroke-width=".7"/></svg>
<svg class="abs" style="left:471.20px;top:3.40px" width="10" height="10" viewBox="0 0 10 10"><circle cx="5" cy="5" r="3.9" fill="#f2f3f5" stroke="#1a1a1a" stroke-width="1" stroke-dasharray="1.6 .6"/><circle cx="5" cy="5" r="3.4" fill="none" stroke="#1a1a1a" stroke-width=".7"/><circle cx="5" cy="5" r="1.5" fill="#fff" stroke="#1a1a1a" stroke-width=".8"/></svg>
<svg class="abs" style="left:484.60px;top:7.00px" width="3" height="2.4" viewBox="0 0 3 2.4"><path d="M.2 .3 L2.8 .3 L1.5 2Z" fill="#222"/></svg>
<svg class="abs" style="left:491.80px;top:3.20px" width="10.2" height="10.8" viewBox="0 0 10.2 10.8"><rect width="10.2" height="10.8" fill="#0a0a0a"/><path d="M1.6 1.4 L8.8 9.6 M8.8 1.4 L1.6 9.6" stroke="#c01818" stroke-width="1.8"/></svg>
<div class="abs" style="left:818.8px;top:0;width:14.2px;height:14px;background:#fbfbfc"></div>
<svg class="abs" style="left:821.40px;top:3.40px" width="8.4" height="8.2" viewBox="0 0 8.4 8.2"><rect width="8.4" height="8.2" fill="#1c1c1c"/><path d="M2.2 2 L5 4.1 L2.2 6.2" fill="none" stroke="#fff" stroke-width="1.1"/><path d="M6.4 1.6 L6.4 6.6" stroke="#888" stroke-width=".6"/></svg>
<!--/TB-->
<!--RIB-->
<svg class="abs" style="left:17.10px;top:26.90px" width="11" height="10" viewBox="0 0 11 10"><path d="M2 4.6 L4.4 1 L7 1.6 L6.6 4 L9.6 5 L9.6 7 L6.6 9 L2.4 7.4Z" fill="#e3e5e9" stroke="#bcbfc5" stroke-width=".7" stroke-linejoin="round"/><path d="M1 1 L3.6 2.2 L2.6 3.4Z" fill="#bcbfc5" stroke="#bcbfc5" stroke-width=".7" stroke-linejoin="round"/></svg>
<svg class="abs" style="left:58.50px;top:22.90px" width="11" height="10" viewBox="0 0 11 10"><path d="M2 4 L6 2.6 L9.6 3.8 L9.6 7.6 L5.6 9.2 L2 7.8Z" fill="#e3e5e9" stroke="#bcbfc5" stroke-width=".7" stroke-linejoin="round"/><path d="M2 4 L5.6 5.4 L9.6 3.8 M5.6 5.4 L5.6 9.2" fill="none" stroke="#bcbfc5" stroke-width=".7" stroke-linejoin="round"/><path d="M5 .6 L8 .6 L8 2.4" fill="none" stroke="#bcbfc5" stroke-width=".7" stroke-linejoin="round"/></svg>
<svg class="abs" style="left:100.50px;top:25.90px" width="11" height="10" viewBox="0 0 11 10"><path d="M2.4 1.4 Q3.6 .2 4.8 1.4 L9 6 Q10 7.6 8.6 8.8 Q7.2 9.8 6 8.6 L2 4 Q1.2 2.6 2.4 1.4Z" fill="#e3e5e9" stroke="#bcbfc5" stroke-width=".7" stroke-linejoin="round"/><path d="M3.6 2.8 L7.4 7" fill="none" stroke="#bcbfc5" stroke-width=".7" stroke-linejoin="round"/></svg>
<svg class="abs" style="left:145.50px;top:26.40px" width="11" height="10" viewBox="0 0 11 10"><path d="M1 .8 L10 .8 L10 9.4 L1 9.4Z" fill="#e3e5e9" stroke="#bcbfc5" stroke-width=".7" stroke-linejoin="round"/><path d="M1 2.6 L10 2.6" fill="none" stroke="#bcbfc5" stroke-width=".7" stroke-linejoin="round"/><path d="M3.4 5.4 L5.6 4.2 L7.8 5 L7.8 7.2 L5.6 8.2 L3.4 7.2Z" fill="#e3e5e9" stroke="#bcbfc5" stroke-width=".7" stroke-linejoin="round"/></svg>
<svg class="abs" style="left:201.00px;top:22.40px" width="11" height="10" viewBox="0 0 11 10"><path d="M1.2 1 L4.4 1 L4.4 4 L1.2 4Z" fill="#e3e5e9" stroke="#bcbfc5" stroke-width=".7" stroke-linejoin="round"/><path d="M6.6 1 L9.8 1 L9.8 4 L6.6 4Z" fill="#e3e5e9" stroke="#bcbfc5" stroke-width=".7" stroke-linejoin="round"/><path d="M1.2 6 L4.4 6 L4.4 9 L1.2 9Z" fill="#e3e5e9" stroke="#bcbfc5" stroke-width=".7" stroke-linejoin="round"/><path d="M6.6 6 L9.8 6 L9.8 9 L6.6 9Z" fill="#e3e5e9" stroke="#bcbfc5" stroke-width=".7" stroke-linejoin="round"/></svg>
<svg class="abs" style="left:265.50px;top:26.40px" width="11" height="10" viewBox="0 0 11 10"><path d="M1.6 3 L7 3 L9.4 5 L9.4 9.4 L1.6 9.4Z" fill="#e3e5e9" stroke="#bcbfc5" stroke-width=".7" stroke-linejoin="round"/><path d="M3.6 .6 L3.6 6 M2.4 1.4 L4.8 1.4" fill="none" stroke="#bcbfc5" stroke-width=".7" stroke-linejoin="round"/><path d="M6 4.6 L6 8" fill="none" stroke="#bcbfc5" stroke-width=".7" stroke-linejoin="round"/></svg>
<svg class="abs" style="left:318.00px;top:22.40px" width="11" height="10" viewBox="0 0 11 10"><path d="M2 4 L5.6 2.6 L9 4 L9 7.6 L5.6 9.2 L2 7.6Z" fill="#e3e5e9" stroke="#bcbfc5" stroke-width=".7" stroke-linejoin="round"/><path d="M6 .6 Q9.6 .6 9.8 3 M9.8 3 L8.6 2.2" fill="none" stroke="#bcbfc5" stroke-width=".7" stroke-linejoin="round"/></svg>
<svg class="abs" style="left:363.50px;top:25.90px" width="11" height="10" viewBox="0 0 11 10"><path d="M3 2.6 L5.6 1.4 L8.2 2.6 L8.2 5 L5.6 6 L3 5Z" fill="#e3e5e9" stroke="#bcbfc5" stroke-width=".7" stroke-linejoin="round"/><path d="M1.2 6 L3.6 5 L6 6 L6 8.4 L3.6 9.6 L1.2 8.4Z" fill="#e3e5e9" stroke="#bcbfc5" stroke-width=".7" stroke-linejoin="round"/><path d="M6.4 6.4 L8.6 5.4 L10.4 6.4 L10.4 8.4 L8.6 9.4 L6.4 8.4Z" fill="#e3e5e9" stroke="#bcbfc5" stroke-width=".7" stroke-linejoin="round"/></svg>
<svg class="abs" style="left:420.00px;top:22.40px" width="11" height="10" viewBox="0 0 11 10"><path d="M1.6 3.4 L5 2 L8.6 3.4 L8.6 8 L5 9.6 L1.6 8Z" fill="#e3e5e9" stroke="#bcbfc5" stroke-width=".7" stroke-linejoin="round"/><path d="M5 .4 Q7.4 .4 7.4 2.6 L7.4 6 Q7.4 7 5 7" fill="none" stroke="#bcbfc5" stroke-width=".7" stroke-linejoin="round"/></svg>
<svg class="abs" style="left:481.30px;top:22.40px" width="11" height="10" viewBox="0 0 11 10"><path d="M3 3.4 L8.6 2 L8.6 7.6 L3 9.2Z" fill="#e3e5e9" stroke="#bcbfc5" stroke-width=".7" stroke-linejoin="round"/><path d="M1 .8 L2.6 2.4 M1 .8 L2.2 .8 M1 .8 L1 2" fill="none" stroke="#bcbfc5" stroke-width=".7" stroke-linejoin="round"/></svg>
<svg class="abs" style="left:538.00px;top:25.90px" width="11" height="10" viewBox="0 0 11 10"><path d="M2.4 5.4 A3.2 3.2 0 1 0 8.8 5.4 A3.2 3.2 0 1 0 2.4 5.4Z" fill="#e3e5e9" stroke="#bcbfc5" stroke-width=".7" stroke-linejoin="round"/><path d="M5.6 3.6 L5.6 5.4 L7 6.2" fill="none" stroke="#bcbfc5" stroke-width=".7" stroke-linejoin="round"/><path d="M6.8 .6 L9.8 .6 L9.8 3.4" fill="none" stroke="#bcbfc5" stroke-width=".7" stroke-linejoin="round"/></svg>
<svg class="abs" style="left:582.10px;top:25.90px" width="11" height="10" viewBox="0 0 11 10"><path d="M1.2 1 L9 1 L9 7 L1.2 7Z" fill="#e3e5e9" stroke="#bcbfc5" stroke-width=".7" stroke-linejoin="round"/><path d="M1.2 3 L9 3 M4 1 L4 7" fill="none" stroke="#bcbfc5" stroke-width=".7" stroke-linejoin="round"/><path d="M6 5.4 L8.2 4.6 L10.2 5.4 L10.2 8 L8.2 9.2 L6 8Z" fill="#e3e5e9" stroke="#bcbfc5" stroke-width=".7" stroke-linejoin="round"/></svg>
<svg class="abs" style="left:628.00px;top:25.90px" width="11" height="10" viewBox="0 0 11 10"><path d="M1.6 5.6 A2.6 2.6 0 1 0 6.8 5.6 A2.6 2.6 0 1 0 1.6 5.6Z" fill="#e3e5e9" stroke="#bcbfc5" stroke-width=".7" stroke-linejoin="round"/><path d="M7 1 L9 2.2 L9 4 M7.4 3.4 L8.6 2.4" fill="none" stroke="#bcbfc5" stroke-width=".7" stroke-linejoin="round"/></svg>
<svg class="abs" style="left:686.50px;top:25.90px" width="11" height="10" viewBox="0 0 11 10"><path d="M1.4 5.4 L4 4 L6.6 5.4 L6.6 8 L4 9.4 L1.4 8Z" fill="#e3e5e9" stroke="#bcbfc5" stroke-width=".7" stroke-linejoin="round"/><path d="M7.4 2 A1.4 1.4 0 1 0 10.2 2 A1.4 1.4 0 1 0 7.4 2Z" fill="#e3e5e9" stroke="#bcbfc5" stroke-width=".7" stroke-linejoin="round"/></svg>
<svg class="abs" style="left:737.10px;top:25.90px" width="11" height="10" viewBox="0 0 11 10"><path d="M1 1.4 L9.6 5 L6 6 L7.8 9.4 L6.4 9.8 L4.8 6.6 L2.4 8.6Z" fill="#e3e5e9" stroke="#bcbfc5" stroke-width=".7" stroke-linejoin="round"/><path d="M1 1.4 L9.6 1.4" fill="none" stroke="#bcbfc5" stroke-width=".7" stroke-linejoin="round"/></svg>
<svg class="abs" style="left:775.00px;top:25.90px" width="11" height="10" viewBox="0 0 11 10"><path d="M1.6 5 A4 4 0 1 0 9.6 5 A4 4 0 1 0 1.6 5Z" fill="#e3e5e9" stroke="#bcbfc5" stroke-width=".7" stroke-linejoin="round"/><path d="M5.6 2.4 L5.6 5 L7.2 6.4" fill="none" stroke="#bcbfc5" stroke-width=".7" stroke-linejoin="round"/><path d="M3 8.6 L8.4 8.6 L8.4 9.8 L3 9.8Z" fill="#e3e5e9" stroke="#bcbfc5" stroke-width=".7" stroke-linejoin="round"/></svg>
<svg class="abs" style="left:824.60px;top:26.00px" width="10" height="9.4" viewBox="0 0 10 9.4"><path d="M.8 2.4 L2.8 2.4 L3.6 1 L7.6 1 L8.4 2.4 L10 2.4 L10 8.8 L.8 8.8Z" fill="#f2f3f5" stroke="#1a1a1a" stroke-width=".9" stroke-linejoin="round"/><circle cx="5.6" cy="5.4" r="2.2" fill="#fff" stroke="#1a1a1a" stroke-width=".9"/></svg>
<svg class="abs" style="left:62.00px;top:54.10px" width="2.8" height="2.2" viewBox="0 0 2.8 2.2"><path d="M.2 .3 L2.6 .3 L1.4 1.9Z" fill="#70737a"/></svg>
<svg class="abs" style="left:205.60px;top:54.10px" width="2.8" height="2.2" viewBox="0 0 2.8 2.2"><path d="M.2 .3 L2.6 .3 L1.4 1.9Z" fill="#70737a"/></svg>
<svg class="abs" style="left:321.90px;top:54.10px" width="2.8" height="2.2" viewBox="0 0 2.8 2.2"><path d="M.2 .3 L2.6 .3 L1.4 1.9Z" fill="#70737a"/></svg>
<svg class="abs" style="left:424.60px;top:54.10px" width="2.8" height="2.2" viewBox="0 0 2.8 2.2"><path d="M.2 .3 L2.6 .3 L1.4 1.9Z" fill="#70737a"/></svg>
<svg class="abs" style="left:485.60px;top:54.10px" width="2.8" height="2.2" viewBox="0 0 2.8 2.2"><path d="M.2 .3 L2.6 .3 L1.4 1.9Z" fill="#70737a"/></svg>
<div class="abs" style="left:345.0px;top:20px;width:1px;height:40px;background:#d4d7dc"></div><div class="abs" style="left:346.0px;top:20px;width:1px;height:40px;background:#e0e2e7"></div>
<div class="abs" style="left:392.8px;top:20px;width:1px;height:40px;background:#d4d7dc"></div><div class="abs" style="left:393.8px;top:20px;width:1px;height:40px;background:#e0e2e7"></div>
<div class="abs" style="left:515.8px;top:20px;width:1px;height:40px;background:#d4d7dc"></div><div class="abs" style="left:516.8px;top:20px;width:1px;height:40px;background:#e0e2e7"></div>
<div class="abs" style="left:571.8px;top:20px;width:1px;height:40px;background:#d4d7dc"></div><div class="abs" style="left:572.8px;top:20px;width:1px;height:40px;background:#e0e2e7"></div>
<div class="abs" style="left:605.3px;top:20px;width:1px;height:40px;background:#d4d7dc"></div><div class="abs" style="left:606.3px;top:20px;width:1px;height:40px;background:#e0e2e7"></div>
<div class="abs" style="left:725.8px;top:20px;width:1px;height:40px;background:#d4d7dc"></div><div class="abs" style="left:726.8px;top:20px;width:1px;height:40px;background:#e0e2e7"></div>
<div class="abs" style="left:759.0px;top:20px;width:1px;height:40px;background:#d4d7dc"></div><div class="abs" style="left:760.0px;top:20px;width:1px;height:40px;background:#e0e2e7"></div>
<div class="abs" style="left:801.5px;top:20px;width:1px;height:40px;background:#d4d7dc"></div><div class="abs" style="left:802.5px;top:20px;width:1px;height:40px;background:#e0e2e7"></div>
<!--/RIB-->
<!--HUD-->
<svg class="abs" style="left:459.50px;top:77.00px" width="10" height="10" viewBox="0 0 10 10"><path d="M3 4 A2.6 2.6 0 1 0 8.4 4 A2.6 2.6 0 1 0 3 4Z" fill="#f4f5f6" stroke="#dfe1e4" stroke-width=".7" stroke-linejoin="round"/><path d="M4 6 L.8 9.2" fill="none" stroke="#dfe1e4" stroke-width=".7" stroke-linejoin="round"/></svg>
<svg class="abs" style="left:473.00px;top:77.00px" width="10" height="10" viewBox="0 0 10 10"><path d="M3.6 3.6 A2.4 2.4 0 1 0 8.6 3.6 A2.4 2.4 0 1 0 3.6 3.6Z" fill="#f4f5f6" stroke="#dfe1e4" stroke-width=".7" stroke-linejoin="round"/><path d="M4.4 5.6 L.8 9.2 M7 1 L9.4 1 L9.4 3" fill="none" stroke="#dfe1e4" stroke-width=".7" stroke-linejoin="round"/></svg>
<svg class="abs" style="left:487.00px;top:77.00px" width="10" height="10" viewBox="0 0 10 10"><path d="M5 2 L8.4 1 L6.4 5.4 L3 8.8 L1 8.8 L1 7Z" fill="#f4f5f6" stroke="#dfe1e4" stroke-width=".7" stroke-linejoin="round"/></svg>
<svg class="abs" style="left:500.00px;top:77.00px" width="10" height="10" viewBox="0 0 10 10"><path d="M1 3 L5 2 L9 3 L9 8 L5 9 L1 8Z" fill="#f4f5f6" stroke="#dfe1e4" stroke-width=".7" stroke-linejoin="round"/><path d="M5 2 L5 9" fill="none" stroke="#dfe1e4" stroke-width=".7" stroke-linejoin="round"/></svg>
<svg class="abs" style="left:513.60px;top:76.60px" width="10" height="10.4" viewBox="0 0 10 10.4"><path d="M.6 7.2 L5 6 L9.4 7.2 L5 9.6Z" fill="#4a94cf" stroke="#1d5a90" stroke-width=".6"/><path d="M5 7.6 L5 2.4" stroke="#1d4f80" stroke-width="1.3"/><path d="M5 .4 L6.8 3 L3.2 3Z" fill="#1d4f80"/></svg>
<svg class="abs" style="left:527.60px;top:76.60px" width="10.4" height="10.4" viewBox="0 0 10.4 10.4"><path d="M1 4 Q3 .6 6.4 1.4 L8 3 Q5 3 3.4 6.4Z" fill="#e9c21e" stroke="#7b6410" stroke-width=".5"/><path d="M7.6 1.6 L9.4 3.4 L3.4 9 L1.2 9.6 L1.8 7.4Z" fill="#dfe3e8" stroke="#3d4d66" stroke-width=".7"/><path d="M5.4 5.4 L9.4 9.6" stroke="#2f6fb0" stroke-width="1.1"/></svg>
<svg class="abs" style="left:541.40px;top:77.00px" width="10" height="10" viewBox="0 0 10 10"><path d="M2 3 L3.4 1 L6.6 1 L8 3 L9.2 3 L9.2 9 L.8 9 L.8 3Z" fill="#f4f5f6" stroke="#dfe1e4" stroke-width=".7" stroke-linejoin="round"/><path d="M3 5 L7 5 M3 7 L7 7" fill="none" stroke="#dfe1e4" stroke-width=".7" stroke-linejoin="round"/></svg>
<svg class="abs" style="left:556.00px;top:81.00px" width="2" height="2" viewBox="0 0 2 2"><path d="M.2 .4 L1.8 .4 L1 1.6Z" fill="#8a8d92"/></svg>
<svg class="abs" style="left:562.80px;top:76.60px" width="10" height="10.4" viewBox="0 0 10 10.4"><path d="M1 2.6 L5 1 L9 2.6 L9 8 L5 9.8 L1 8Z" fill="#e9eef3" stroke="#4b5f73" stroke-width=".6" stroke-linejoin="round"/><path d="M1 2.6 L5 4.2 L5 9.8 L1 8Z" fill="#3f8fd0"/><path d="M5 4.2 L9 2.6 M5 4.2 L5 9.8" stroke="#4b5f73" stroke-width=".5" fill="none"/></svg>
<svg class="abs" style="left:576.80px;top:81.00px" width="2" height="2" viewBox="0 0 2 2"><path d="M.2 .4 L1.8 .4 L1 1.6Z" fill="#8a8d92"/></svg>
<svg class="abs" style="left:583.60px;top:77.00px" width="10" height="10" viewBox="0 0 10 10"><path d="M5 1 L6.2 3 L8.6 2.6 L8 5 L9.6 6.6 L7.4 7.4 L6.6 9.4 L5 8 L3.2 9.4 L2.6 7.2 L.6 6.4 L2 5 L1.4 2.6 L3.8 3Z" fill="#f4f5f6" stroke="#dfe1e4" stroke-width=".7" stroke-linejoin="round"/></svg>
<div class="abs" style="left:595.3px;top:75.2px;width:14.7px;height:12.8px;background:#b3b5b9;border:.6px solid #8f9296"></div>
<div class="abs" style="left:610px;top:75.2px;width:7px;height:12.8px;background:#e9eaec;border:.6px solid #a6a9ad;border-left:none"></div>
<svg class="abs" style="left:598.00px;top:76.80px" width="10" height="10" viewBox="0 0 10 10"><path d="M1 5 Q5 .4 9 5 Q5 9.6 1 5Z" fill="#f4f4f4" stroke="#222" stroke-width=".6"/><path d="M5 1.6 A3.4 3.4 0 0 0 5 8.4 Z" fill="#111"/><circle cx="5.2" cy="5" r="1.5" fill="#111"/><path d="M5.4 4.2 L6.4 5 L5.4 5.8" fill="#fff"/></svg>
<svg class="abs" style="left:612.40px;top:81.00px" width="2" height="2" viewBox="0 0 2 2"><path d="M.2 .4 L1.8 .4 L1 1.6Z" fill="#222"/></svg>
<svg class="abs" style="left:619.00px;top:77.00px" width="10" height="10" viewBox="0 0 10 10"><path d="M1 5 A4 4 0 1 0 9 5 A4 4 0 1 0 1 5Z" fill="#f4f5f6" stroke="#dfe1e4" stroke-width=".7" stroke-linejoin="round"/><path d="M5 1 L5 9 M1 5 L9 5" fill="none" stroke="#dfe1e4" stroke-width=".7" stroke-linejoin="round"/></svg>
<svg class="abs" style="left:632.00px;top:77.00px" width="10" height="10" viewBox="0 0 10 10"><path d="M5 1 L9.4 8.6 L.6 8.6Z" fill="#f4f5f6" stroke="#dfe1e4" stroke-width=".7" stroke-linejoin="round"/><path d="M1 9.6 L9 9.6" fill="none" stroke="#dfe1e4" stroke-width=".7" stroke-linejoin="round"/></svg>
<svg class="abs" style="left:646.40px;top:81.00px" width="2" height="2" viewBox="0 0 2 2"><path d="M.2 .4 L1.8 .4 L1 1.6Z" fill="#8a8d92"/></svg>
<svg class="abs" style="left:654.00px;top:77.00px" width="9.4" height="9.8" viewBox="0 0 9.4 9.8"><path d="M.8 2.4 L4.7 .8 L8.6 2.4 L8.6 7.4 L4.7 9.2 L.8 7.4Z" fill="#f6f8fa" stroke="#3f4c5c" stroke-width=".7" stroke-linejoin="round"/><path d="M.8 2.4 L4.7 4 L8.6 2.4 M4.7 4 L4.7 9.2" fill="none" stroke="#3f4c5c" stroke-width=".6"/><path d="M1.2 3 L4.3 4.3 L4.3 8.6 L1.2 7.2Z" fill="#6fb2e4"/></svg>
<svg class="abs" style="left:667.20px;top:77.40px" width="10" height="9.2" viewBox="0 0 10 9.2"><rect x=".6" y=".6" width="8.8" height="6" fill="#eef0f3" stroke="#2e3136" stroke-width=".95"/><path d="M.6 2.2 L9.4 2.2" stroke="#8a8d92" stroke-width=".5"/><path d="M5 6.6 L5 8 M2.8 8.6 L7.2 8.6 L5 7.4Z" stroke="#3a3d42" stroke-width=".7" fill="#3a3d42"/></svg>
<svg class="abs" style="left:681.30px;top:81.00px" width="2" height="2" viewBox="0 0 2 2"><path d="M.2 .4 L1.8 .4 L1 1.6Z" fill="#8a8d92"/></svg>
<svg class="abs" style="left:0;top:0" width="833" height="550" viewBox="0 0 833 550"><path d="M153.9 500.8 L153.7 490.5" stroke="#1f3d1f" stroke-width="1.6"/><path d="M153.1 500 L153.1 491" stroke="#86c070" stroke-width=".6"/><path d="M153.7 486.6 L156.3 491.4 L151.1 491.4Z" fill="#1c2b1c"/><path d="M153.7 488.4 L154.8 490.8 L152.6 490.8Z" fill="#4f8f45"/><path d="M153.9 500.8 L162 503.2" stroke="#8b1717" stroke-width="1.5"/><path d="M161 501.4 L165 503.6 L161.4 505.4 L160.4 503.4Z" fill="#8b1717"/><circle cx="162.3" cy="503.5" r=".8" fill="#fff" opacity=".8"/><path d="M153.9 500.8 L148.6 503.4" stroke="#0f1a6a" stroke-width="1.6"/><path d="M149.8 502 L145.6 504.4 L149.4 505.6Z" fill="#12128f"/><circle cx="147.6" cy="504" r="1.5" fill="#12128f"/><text x="151.9" y="484.6" font-family="Liberation Sans, sans-serif" font-size="5" fill="#8c8f93">Y</text><text x="166.4" y="506.4" font-family="Liberation Sans, sans-serif" font-size="5" fill="#d99a9a">X</text><text x="141" y="508" font-family="Liberation Sans, sans-serif" font-size="5" fill="#6d7fae">Z</text></svg>
<!--/HUD-->
<!-- top line -->
<div class="abs" style="left:82px;top:14.8px;width:751px;height:1.6px;background:#c3c5c9"></div>
<div class="abs" style="left:0;top:16.4px;width:833px;height:1px;background:#e6e8eb"></div>
<!-- menu -->
<div class="t m" style="left:97px;top:5px">Datei</div>
<div class="t m" style="left:119px;top:5px">Bearbeiten</div>
<div class="t m" style="left:157px;top:5px">Ansicht</div>
<div class="t m" style="left:185px;top:5px">Einfügen</div>
<div class="t m" style="left:219px;top:5px">Extras</div>
<div class="t m" style="left:243px;top:5px">Fenster</div>
<div class="t m" style="left:272px;top:5px">Hilfe</div>
<div class="t m" style="left:631px;top:5px;letter-spacing:-.34px">Lektion12-1.SLDASM *</div>
<!-- ribbon labels -->
<div class="c" style="left:21px;top:37px">Komponente<br>bearbeiten</div>
<div class="c" style="left:63px;top:33px">Komponenten<br>einfügen</div>
<div class="c" style="left:106px;top:37px">Verknüpfung</div>
<div class="c" style="left:151px;top:37px">Vorschaufenster<br>für<br>Komponenten</div>
<div class="c" style="left:207px;top:33px">Lineares<br>Komponentenmuster</div>
<div class="c" style="left:271px;top:37px">Intelligente<br>Verbindungselemente</div>
<div class="c" style="left:323px;top:33px">Komponente<br>verschieben</div>
<div class="c" style="left:368px;top:37px">Ausgeblendete<br>Komponenten<br>anzeigen</div>
<div class="c" style="left:426px;top:33px">Baugruppen-Features</div>
<div class="c" style="left:487px;top:33px">Referenzgeometrie</div>
<div class="c" style="left:543px;top:37px">Neue<br>Bewegungsstudie</div>
<div class="c" style="left:588px;top:37px">Stückliste</div>
<div class="c" style="left:632px;top:37px">Explosionsansicht</div>
<div class="c" style="left:692px;top:37px">Explosionslinienskizze</div>
<div class="c" style="left:742px;top:37px">Instant3D</div>
<div class="c" style="left:780px;top:37px">SpeedPak<br>aktualisieren</div>
<div class="c" style="left:829.6px;top:37px;color:#111;font-weight:bold;letter-spacing:-.3px">Momentaufnahme<br>machen</div>
<!-- tabs -->
<div class="tab" style="left:0;width:41px;background:#e4e6ea;font-weight:bold">Baugruppe</div>
<div class="tab" style="left:41px;width:29px">Layout</div>
<div class="tab" style="left:70px;width:30px">Skizze</div>
<div class="tab" style="left:100px;width:37px">Evaluieren</div>
<div class="tab" style="left:137px;width:105px;letter-spacing:-.32px">SOLIDWORKS Zusatzanwendungen</div>
<div class="tab" style="left:242px;width:31px">Elektrik</div>
<div class="tab" style="left:273px;width:41px">Rohrsystem</div>
<div class="tab" style="left:314px;width:54px">Schlauchsystem</div>
<div class="tab" style="left:368px;width:81px">Benutzerdefinierte Leitung</div>
<div class="tab" style="left:449px;width:62px;letter-spacing:-.32px">SOLIDWORKS MBD</div>

</body></html>
